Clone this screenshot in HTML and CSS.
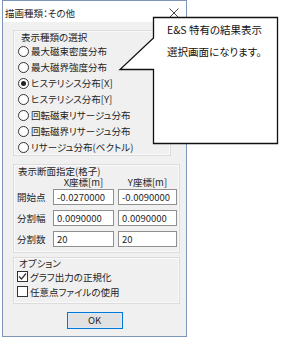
FILE: index.html
```html
<!DOCTYPE html>
<html>
<head>
    <meta charset="utf-8" />
    <title>描画種類：その他</title>
    <link rel="stylesheet" href="styles.css">
</head>
<body>
    <div class="window">
        <div class="titlebar">
            <span class="title">描画種類：その他</span>
            <svg class="close" width="10" height="10" viewBox="0 0 10 10"><path d="M0.5 0.5 L9.5 9.5 M9.5 0.5 L0.5 9.5" stroke="#444" stroke-width="1" fill="none"/></svg>
        </div>
        <div class="client">
            <div class="group kinds">
                <div class="legend">表示種類の選択</div>
                <div class="radio"><span class="mark"></span>最大磁束密度分布</div>
                <div class="radio"><span class="mark"></span>最大磁界強度分布</div>
                <div class="radio on"><span class="mark"></span>ヒステリシス分布[X]</div>
                <div class="radio"><span class="mark"></span>ヒステリシス分布[Y]</div>
                <div class="radio"><span class="mark"></span>回転磁束リサージュ分布</div>
                <div class="radio"><span class="mark"></span>回転磁界リサージュ分布</div>
                <div class="radio"><span class="mark"></span>リサージュ分布(ベクトル)</div>
            </div>
            <div class="group section">
                <div class="legend">表示断面指定(格子)</div>
                <div class="fields">
                    <span></span>
                    <span class="colhead">X座標[m]</span>
                    <span class="colhead">Y座標[m]</span>
                    <span class="rowhead">開始点</span>
                    <span class="field">-0.0270000</span>
                    <span class="field">-0.0090000</span>
                    <span class="rowhead">分割幅</span>
                    <span class="field">0.0090000</span>
                    <span class="field">0.0090000</span>
                    <span class="rowhead">分割数</span>
                    <span class="field">20</span>
                    <span class="field">20</span>
                </div>
            </div>
            <div class="group options">
                <div class="legend">オプション</div>
                <div class="check"><span class="box"><svg width="9" height="9" viewBox="0 0 9 9"><path d="M1 4.5 L3.5 7 L8 1.5" stroke="#333" stroke-width="1.2" fill="none"/></svg></span>グラフ出力の正規化</div>
                <div class="check"><span class="box"></span>任意点ファイルの使用</div>
            </div>
            <div class="buttons"><span class="button">OK</span></div>
        </div>
    </div>

    <!-- balloon over the dialog -->
    <svg class="balloon" width="282" height="342" viewBox="0 0 282 342">
        <path d="M153.5 17.5 H277.5 V143.5 H153.5 V69.5 H120 L153.5 38 Z" fill="#fff" stroke="#111" stroke-width="1.3"/>
    </svg>
    <div class="balloon-text">E&amp;S 特有の結果表示<br>選択画面になります。</div>
</body>
</html>
```

FILE: styles.css
```css
body {
    margin: 0;
    background: #fff;
    font-family: "Noto Sans CJK JP", sans-serif;
    font-feature-settings: "palt";
    font-size: 9.5px;
    color: #1e1e1e;
}

.window {
    margin-left: 2px;
    width: 185px;
    height: 337px;
    box-sizing: border-box;
    border: 1px solid #7d95b9;
    display: flex;
    flex-direction: column;
}

.titlebar {
    height: 21px;
    display: flex;
    align-items: center;
    justify-content: space-between;
    padding: 2px 7px 0 2px;
    box-sizing: border-box;
    background: #fff;
}

.client {
    flex: 1;
    background: #f0f0f0;
    padding: 8px 0 0 10px;
    display: flex;
    flex-direction: column;
    align-items: flex-start;
}

.group {
    box-sizing: border-box;
    border: 1px solid #dcdcdc;
    box-shadow: inset 0 0 0 1px #f9f9f9;
}

    .group .legend {
        height: 12px;
        line-height: 12px;
    }

.kinds {
    width: 158px;
    height: 126px;
}

    .kinds .legend {
        padding-left: 7px;
    }

.section {
    width: 167px;
    margin-top: 8px;
    padding: 0 0 5px 3px;
}

    .section .legend {
        padding-left: 1px;
    }

.options {
    width: 167px;
    margin-top: 4px;
    padding: 0 0 4px 3px;
}

    .options .legend {
        height: 11px;
        line-height: 11px;
        padding-left: 2px;
    }

.radio {
    height: 16px;
    padding-left: 4px;
    display: flex;
    align-items: center;
}

    .radio .mark {
        width: 11px;
        height: 11px;
        box-sizing: border-box;
        border: 1px solid #333;
        border-radius: 50%;
        background: #fff;
        margin-right: 2px;
        display: flex;
        align-items: center;
        justify-content: center;
    }

    .radio.on .mark::after {
        content: "";
        width: 5px;
        height: 5px;
        border-radius: 50%;
        background: #222;
    }

.fields {
    display: grid;
    grid-template-columns: 32px 61px 59px;
    column-gap: 4px;
    row-gap: 5px;
}

    .fields .colhead {
        height: 11px;
        line-height: 11px;
        margin-bottom: -4px;
        text-align: center;
    }

    .fields .rowhead {
        line-height: 16px;
    }

    .fields .field {
        height: 16px;
        box-sizing: border-box;
        border: 1px solid #8f8f8f;
        background: #fff;
        padding-left: 3px;
        line-height: 14px;
    }

.check {
    height: 15px;
    display: flex;
    align-items: center;
}

    .check .box {
        width: 11px;
        height: 11px;
        box-sizing: border-box;
        border: 1px solid #333;
        background: #fff;
        margin-right: 2px;
        display: flex;
        align-items: center;
        justify-content: center;
    }

.buttons {
    align-self: stretch;
    margin: 8px 0 0 -10px;
    display: flex;
    justify-content: center;
}

.button {
    width: 56px;
    height: 17px;
    box-sizing: border-box;
    border: 1px solid #0078d7;
    box-shadow: inset 0 0 0 1px #dbe8f5;
    background: #e1e1e1;
    text-align: center;
    line-height: 15px;
}

.balloon {
    position: absolute;
    left: 0;
    top: 0;
}

.balloon-text {
    position: absolute;
    left: 167px;
    top: 19px;
    font-size: 10.5px;
    line-height: 22px;
    color: #111;
}
```
